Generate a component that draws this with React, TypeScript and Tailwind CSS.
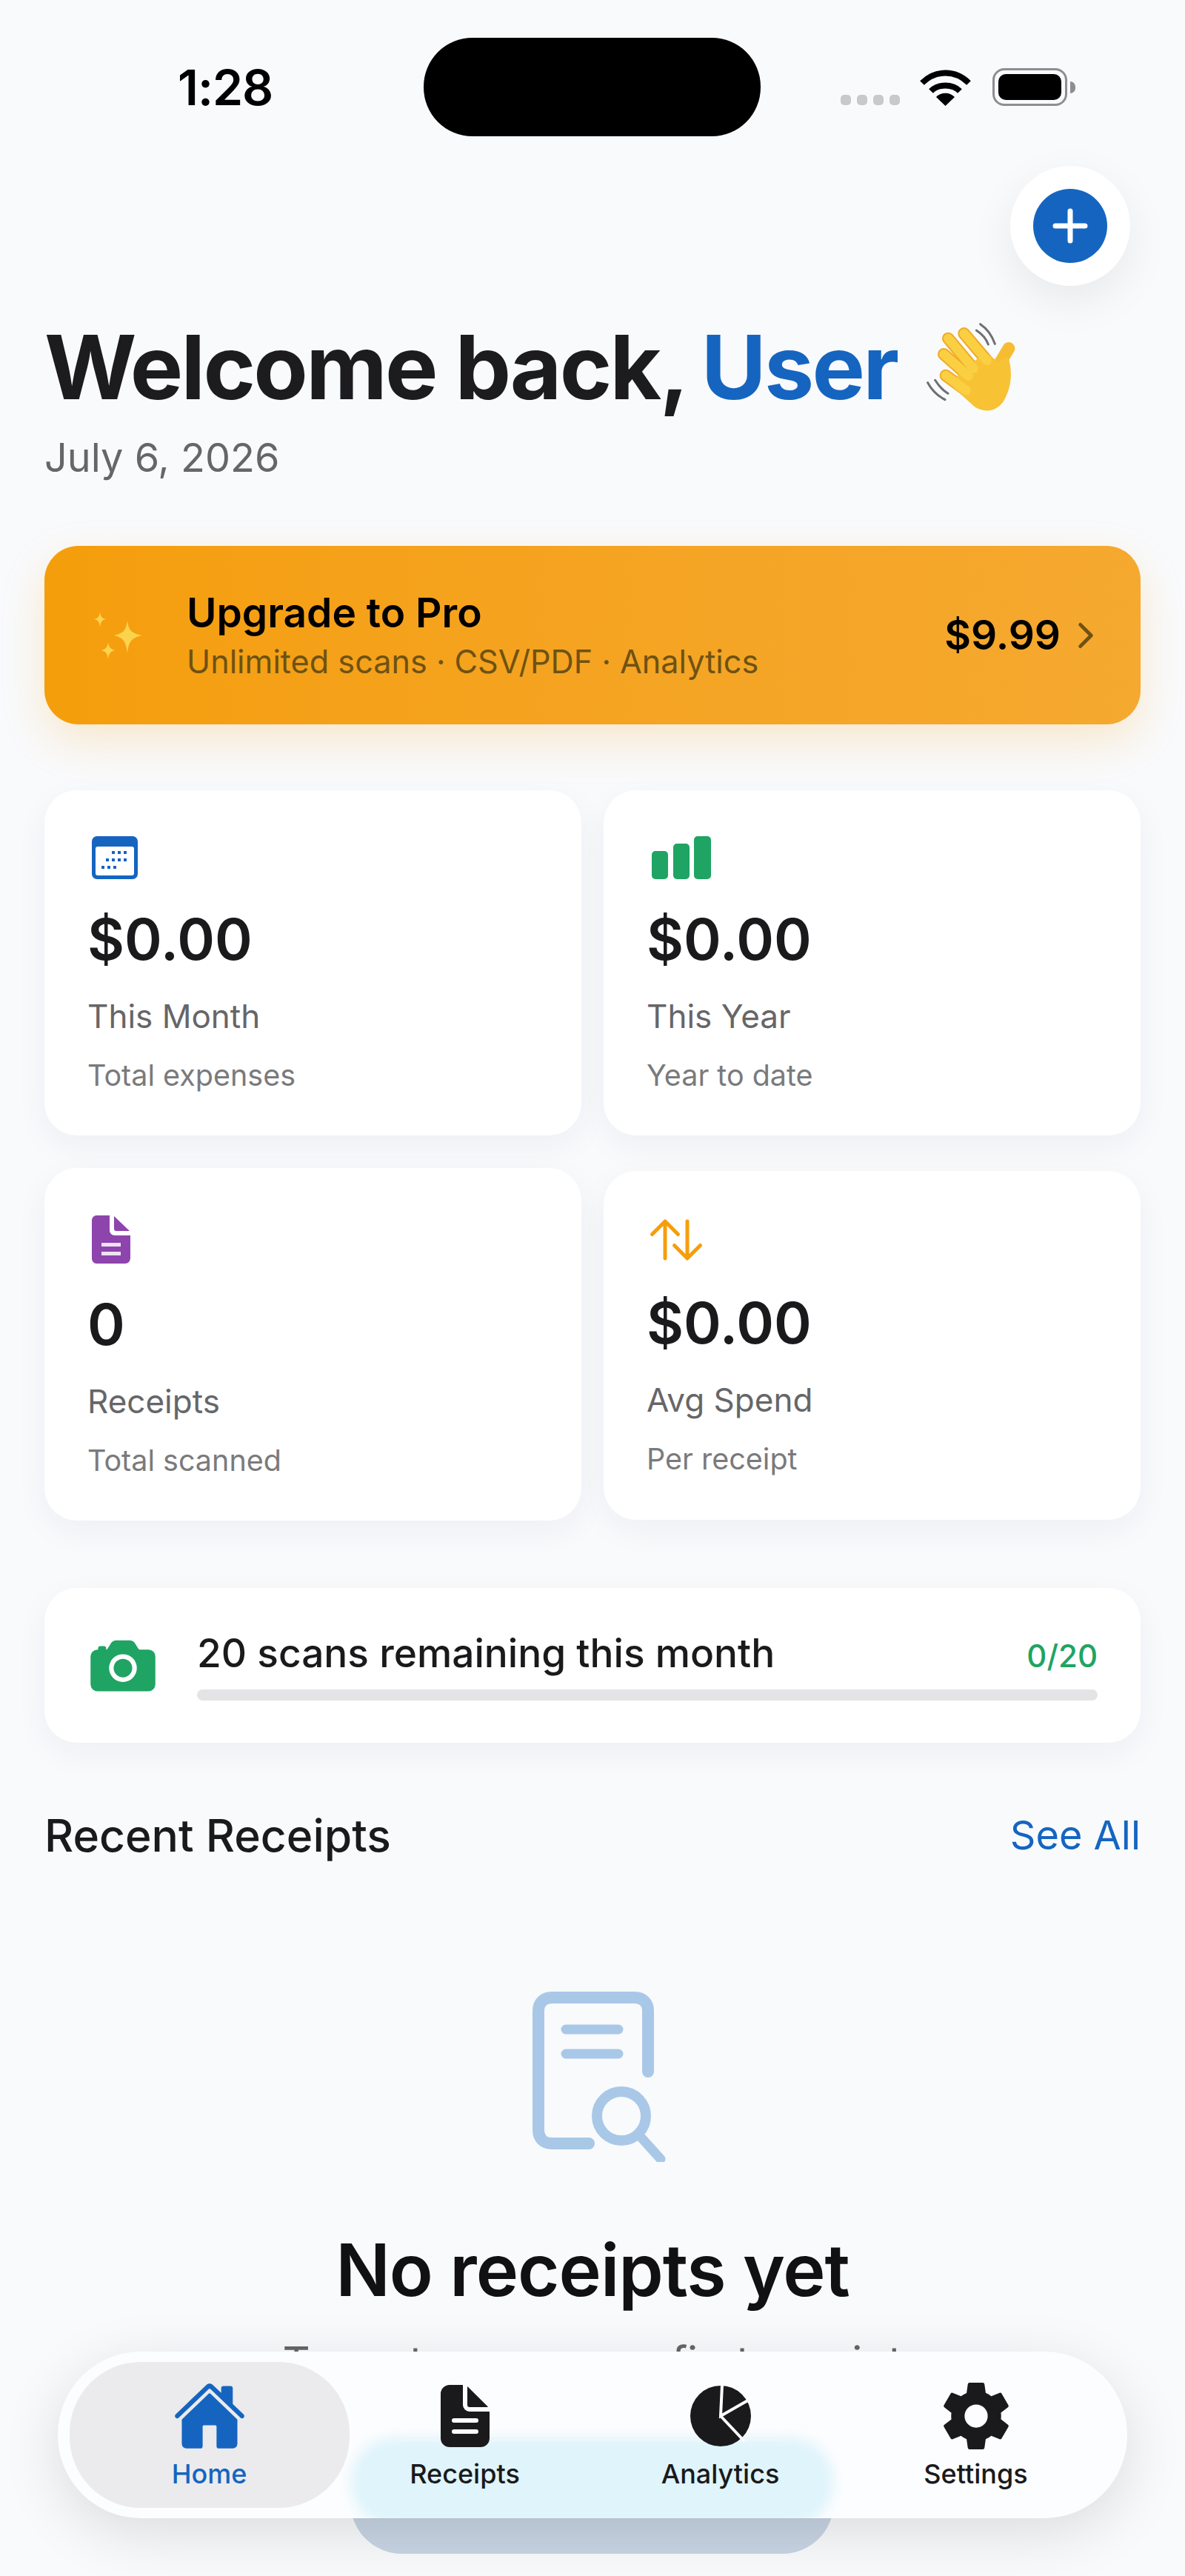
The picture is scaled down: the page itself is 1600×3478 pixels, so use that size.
import React from 'react';
import {
  IoCamera,
  IoChevronForward,
  IoDocumentText,
  IoHome,
  IoSettingsSharp,
  IoSwapVertical,
} from 'react-icons/io5';

const StatusBar = () => (
  <div className="flex h-[184px] items-center pt-[51px] pl-[240px]">
    <div className="w-[332px] text-[66px] leading-none font-semibold tracking-[-1px] text-black">1:28</div>
    <div className="h-[133px] w-[455px] rounded-[66px] bg-black" />
    <div className="ml-[108px] flex gap-[8px] self-end mb-[42px]">
      <div className="h-[14px] w-[14px] rounded-[5px] bg-[#c9c9cb]" />
      <div className="h-[14px] w-[14px] rounded-[5px] bg-[#c9c9cb]" />
      <div className="h-[14px] w-[14px] rounded-[5px] bg-[#c9c9cb]" />
      <div className="h-[14px] w-[14px] rounded-[5px] bg-[#c9c9cb]" />
    </div>
    <svg className="ml-[27px] h-[50px] w-[69px]" viewBox="0 0 69 50" fill="none" stroke="#000" strokeWidth="8">
      <path d="M3 19C21 1 48 1 66 19" />
      <path d="M15 30C25 20 44 20 54 30" />
      <path d="M34.5 50L22 38C29 31 40 31 47 38Z" fill="#000" stroke="none" />
    </svg>
    <div className="ml-[29px] flex items-center">
      <div className="flex h-[51px] w-[101px] items-center justify-center rounded-[16px] border-[3px] border-[#8e8e90]">
        <div className="h-[35px] w-[85px] rounded-[10px] bg-black" />
      </div>
      <div className="ml-[4px] h-[16px] w-[7px] rounded-r-full bg-[#8e8e90]" />
    </div>
  </div>
);

const WaveEmoji = () => (
  <svg className="ml-[40px] h-[120px] w-[120px]" viewBox="150 105 360 360" fill="none" strokeLinecap="round">
    <g stroke="#6f6f72" strokeWidth="9">
      <path d="M352 135C375 150 392 170 400 192" />
      <path d="M368 110C395 128 415 155 427 190" />
      <path d="M155 347C170 375 195 400 225 416" />
      <path d="M185 337C198 358 215 378 237 391" />
    </g>
    <g stroke="#eeac2a" strokeWidth="50">
      <path d="M238 168L340 290" />
      <path d="M302 148L395 258" />
      <path d="M220 232L320 320" />
      <path d="M228 318L310 378" />
      <path d="M440 280L483 208" stroke="#f6bc32" />
    </g>
    <path d="M290 300L390 225L440 262L480 240C500 300 495 370 460 425C430 465 385 470 345 445L245 355Z" fill="#f8c235" />
    <g stroke="#fbcf42" strokeWidth="38">
      <path d="M238 168L340 290" />
      <path d="M302 148L395 258" />
      <path d="M220 232L320 320" />
      <path d="M228 318L310 378" />
    </g>
  </svg>
);

const Sparkles = () => (
  <svg className="h-[64px] w-[66px]" viewBox="0 0 66 64" fill="#fcd34d">
    <path d="M46 12C48 26 52 29 66 32C52 35 48 39 46 56C44 39 40 35 28 32C40 29 44 26 46 12Z" />
    <path d="M9 0C10 7 12 9 17 10C12 11 10 13 9 21C8 13 6 11 1 10C6 9 8 7 9 0Z" />
    <path d="M20 41C21 48 23 50 29 52C23 54 21 56 20 64C19 56 17 54 11 52C17 50 19 48 20 41Z" />
  </svg>
);

const CalendarIcon = () => (
  <svg className="ml-[6px] h-[58px] w-[62px]" viewBox="0 0 62 58">
    <rect width="62" height="58" rx="7" fill="#1565c0" />
    <rect x="5" y="14" width="52" height="39" rx="3" fill="#fff" />
    <g fill="#1565c0">
      <rect x="27" y="20" width="4" height="4" />
      <rect x="35" y="20" width="4" height="4" />
      <rect x="43" y="20" width="4" height="4" />
      <rect x="19" y="30" width="4" height="4" />
      <rect x="27" y="30" width="4" height="4" />
      <rect x="35" y="30" width="4" height="4" />
      <rect x="43" y="30" width="4" height="4" />
      <rect x="13" y="40" width="4" height="4" />
      <rect x="21" y="40" width="4" height="4" />
      <rect x="29" y="40" width="4" height="4" />
    </g>
  </svg>
);

const BarsIcon = () => (
  <svg className="ml-[7px] h-[58px] w-[80px]" viewBox="0 0 80 58" fill="#1fa463">
    <rect x="0" y="20" width="22" height="38" rx="5" />
    <rect x="29" y="10" width="22" height="48" rx="5" />
    <rect x="57" y="0" width="23" height="58" rx="5" />
  </svg>
);

const PurpleDoc = () => (
  <svg className="ml-[6px] h-[65px] w-[52px]" viewBox="0 0 52 65">
    <path d="M6 0H24V20C24 24 27 27 31 27H52V57C52 62 49 65 45 65H6C3 65 0 62 0 58V7C0 3 3 0 6 0Z" fill="#8e44ad" />
    <path d="M30 1L51 21H33C31 21 30 20 30 18Z" fill="#8e44ad" />
    <rect x="13" y="37" width="26" height="5" fill="#fff" opacity="0.85" />
    <rect x="13" y="49" width="26" height="5" fill="#fff" opacity="0.85" />
  </svg>
);

const PieIcon = () => (
  <svg className="h-[84px] w-[84px]" viewBox="0 0 84 84">
    <circle cx="42" cy="42" r="41" fill="currentColor" />
    <path d="M44 0L42 42L84 18M42 42L74 76" fill="none" stroke="#fcfdfe" strokeWidth="4" />
  </svg>
);

const StatCard = ({
  icon,
  value,
  label,
  sub,
  iconHeight,
  valueGap,
  height,
}: {
  icon: React.ReactNode;
  value: string;
  label: string;
  sub: string;
  iconHeight: string;
  valueGap: string;
  height: string;
}) => (
  <div className={`rounded-[44px] bg-white pl-[58px] shadow-[0_14px_44px_rgba(30,40,60,0.05)] ${height}`}>
    <div className={`flex items-end ${iconHeight}`}>{icon}</div>
    <div className={`text-[77px] leading-[96px] font-semibold text-[#1a1a1c] ${valueGap}`}>{value}</div>
    <div className="mt-[28px] text-[44px] leading-[56px] text-[#666668]">{label}</div>
    <div className="mt-[29px] text-[39.5px] leading-[46px] text-[#7a7a7c]">{sub}</div>
  </div>
);

const ReceiptSearch = () => (
  <svg className="ml-[719px] h-[230px] w-[180px]" viewBox="0 0 180 230" fill="none" stroke="#a9c8e8" strokeLinecap="round">
    <path d="M76 205H26C15 205 8 198 8 187V26C8 15 15 8 26 8H138C149 8 156 15 156 26V108" strokeWidth="16" />
    <path d="M45 51H116M45 84H116" strokeWidth="13" />
    <circle cx="120" cy="168" r="33" strokeWidth="14" />
    <path d="M145 195L173 226" strokeWidth="13" />
  </svg>
);

const NavTab = ({ icon, label, active }: { icon: React.ReactNode; label: string; active?: boolean }) => (
  <div
    className={`flex h-[197px] flex-col items-center pt-[29px] ${
      active ? '-mx-[16.5px] rounded-[96px] bg-[#ebebed] text-[#1565c0]' : 'text-[#1a1a1c]'
    }`}
  >
    <div className="flex h-[88px] items-center justify-center">{icon}</div>
    <div className="mt-[12px] text-[36px] leading-[44px] font-medium">{label}</div>
  </div>
);

export default function App() {
  return (
    <div className="relative h-[3478px] w-[1600px] overflow-hidden bg-[#f9fafc] font-['Inter',sans-serif]">
      <StatusBar />

      <div className="flex justify-end pt-[40px] pr-[74px]">
        <div className="flex h-[162px] w-[162px] items-center justify-center rounded-full bg-white shadow-[0_20px_60px_rgba(0,0,0,0.07)]">
          <div className="flex h-[100px] w-[100px] items-center justify-center rounded-full bg-[#1565c0]">
            <svg className="h-[48px] w-[48px]" viewBox="0 0 48 48" stroke="#fff" strokeWidth="7" strokeLinecap="round">
              <path d="M24 4V44M4 24H44" />
            </svg>
          </div>
        </div>
      </div>

      <div className="px-[60px]">
        <h1 className="mt-[38px] flex items-center text-[120px] leading-[144px] font-bold tracking-[-2.7px] text-[#1c1c1f]">
          <span>Welcome back,</span>
          <span className="ml-[19px] text-[#1565c0]">User</span>
          <WaveEmoji />
        </h1>
        <div className="mt-[20px] text-[54px] leading-[60px] text-[#666668]">July 6, 2026</div>

        {/* Upgrade banner */}
        <div className="mt-[89px] flex h-[241px] items-center rounded-[46px] bg-gradient-to-r from-[#f59e0b] to-[#f5a92f] pr-[48px] pl-[66px] shadow-[0_22px_60px_rgba(245,158,11,0.2)]">
          <Sparkles />
          <div className="ml-[60px] flex-1">
            <div className="text-[55px] leading-[62px] font-semibold text-black">Upgrade to Pro</div>
            <div className="mt-[8px] text-[43.2px] leading-[54px] text-[#6e5212]">Unlimited scans · CSV/PDF · Analytics</div>
          </div>
          <div className="text-[55px] font-semibold text-black">$9.99</div>
          <IoChevronForward className="ml-[8px] h-[52px] w-[52px] text-[#6e5212]" />
        </div>

        {/* Stats */}
        <div className="mt-[89px] grid grid-cols-2 items-start gap-x-[30px] gap-y-[44px]">
          <StatCard
            icon={<CalendarIcon />}
            value="$0.00"
            label="This Month"
            sub="Total expenses"
            iconHeight="h-[120px]"
            valueGap="mt-[33px]"
            height="h-[466px]"
          />
          <StatCard
            icon={<BarsIcon />}
            value="$0.00"
            label="This Year"
            sub="Year to date"
            iconHeight="h-[120px]"
            valueGap="mt-[33px]"
            height="h-[466px]"
          />
          <StatCard
            icon={<PurpleDoc />}
            value="0"
            label="Receipts"
            sub="Total scanned"
            iconHeight="h-[129px]"
            valueGap="mt-[34px]"
            height="h-[476px]"
          />
          <div className="mt-[4px]">
            <StatCard
              icon={<IoSwapVertical className="mb-[-8px] h-[80px] w-[80px] -scale-x-100 text-[#f59e0b]" />}
              value="$0.00"
              label="Avg Spend"
              sub="Per receipt"
              iconHeight="h-[125px]"
              valueGap="mt-[32px]"
              height="h-[471px]"
            />
          </div>
        </div>

        {/* Scan quota */}
        <div className="mt-[91px] flex h-[209px] items-center rounded-[44px] bg-white pr-[58px] pl-[58px] shadow-[0_14px_44px_rgba(30,40,60,0.05)]">
          <IoCamera className="h-[100px] w-[100px] -ml-[2px] text-[#1fa463]" />
          <div className="ml-[50px] flex-1">
            <div className="flex items-baseline justify-between">
              <span className="text-[53.2px] leading-[62px] font-medium text-[#1a1a1c]">20 scans remaining this month</span>
              <span className="text-[42px] font-medium text-[#1fa463]">0/20</span>
            </div>
            <div className="mt-[14px] h-[15px] rounded-full bg-[#e4e4e6]" />
          </div>
        </div>

        <div className="mt-[89px] flex items-center justify-between">
          <span className="text-[60.6px] leading-[72px] font-medium text-[#1a1a1c]">Recent Receipts</span>
          <span className="text-[54px] leading-[72px] text-[#1565c0]">See All</span>
        </div>
      </div>

      {/* Empty state */}
      <div className="mt-[175px]">
        <ReceiptSearch />
        <div className="mt-[91px] text-center text-[97px] leading-[110px] font-semibold tracking-[-1px] text-[#111113]">No receipts yet</div>
        <div className="mt-[37px] text-center text-[57.7px] leading-[64px] text-[#666668]">Tap + to scan your first receipt</div>
      </div>

      {/* Scan button peeking out under the tab bar */}
      <div className="absolute top-[3287px] left-[473px] h-[161px] w-[653px] rounded-[70px] bg-[#c8d5e4]" />

      {/* Tab bar */}
      <div className="absolute top-[3175px] left-[78px] h-[225px] w-[1444px] overflow-hidden rounded-[112px] bg-[#fcfdfe] shadow-[0_20px_80px_rgba(0,0,0,0.12)]">
        <div className="absolute top-[116px] left-[395px] h-[120px] w-[653px] rounded-[60px] bg-[#dff4fb] blur-[8px]" />
        <div className="relative grid grid-cols-4 px-[32px] pt-[14px]">
          <NavTab active label="Home" icon={<IoHome className="h-[100px] w-[100px]" />} />
          <NavTab label="Receipts" icon={<IoDocumentText className="h-[96px] w-[96px]" />} />
          <NavTab label="Analytics" icon={<PieIcon />} />
          <NavTab label="Settings" icon={<IoSettingsSharp className="h-[100px] w-[100px]" />} />
        </div>
      </div>
    </div>
  );
}
